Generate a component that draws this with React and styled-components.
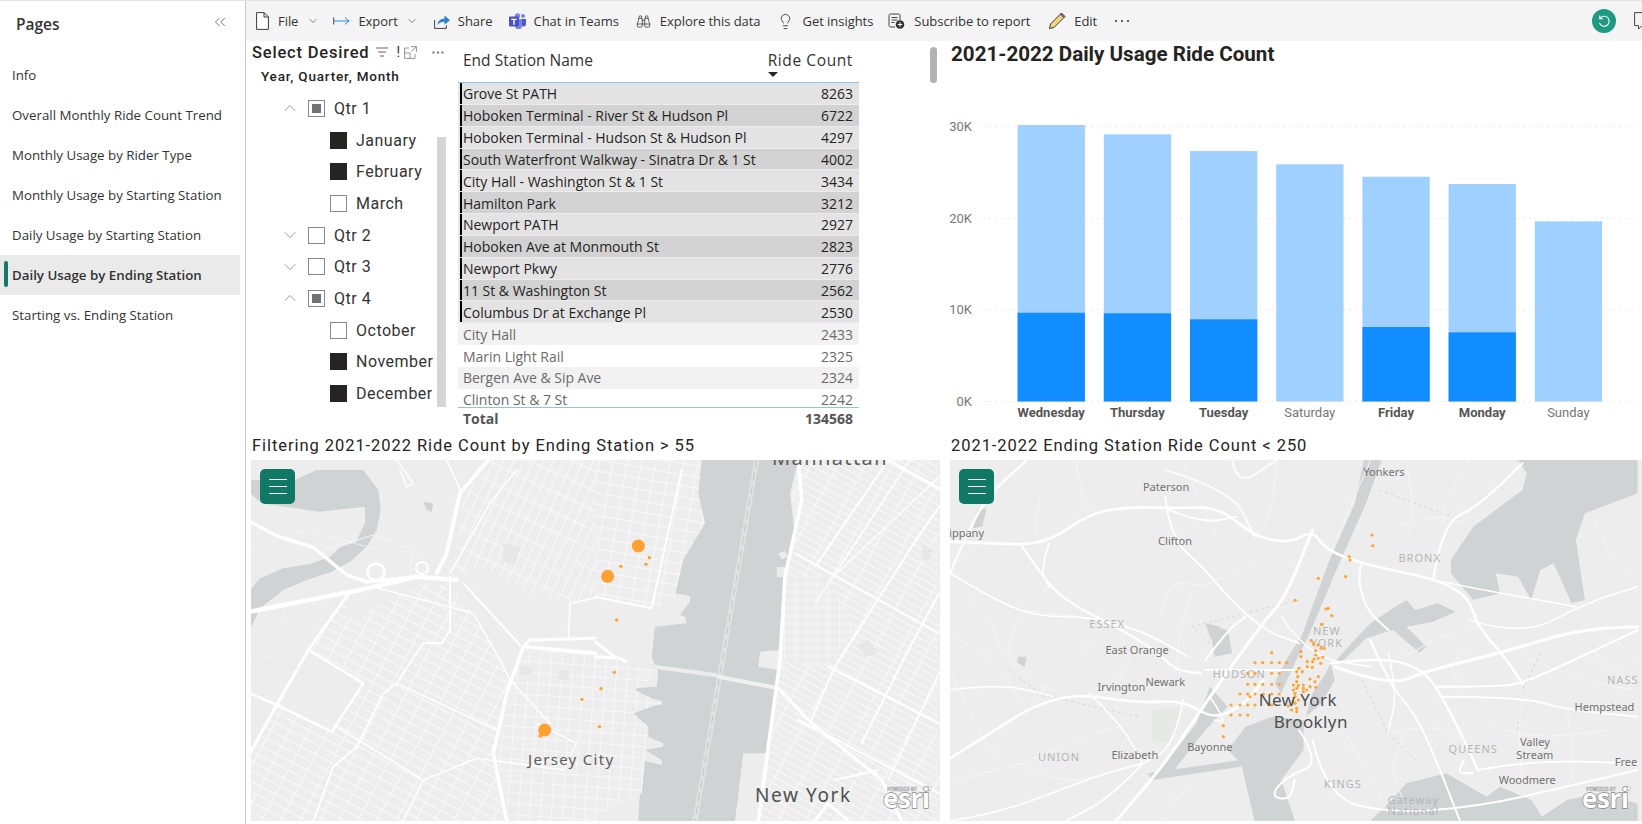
import React from 'react';
import styled, { createGlobalStyle } from 'styled-components';
import { Binoculars, ChevronDown, ChevronUp, ChevronsLeft, Lightbulb } from 'lucide-react';

const GlobalStyle = createGlobalStyle`
  html, body { margin: 0; padding: 0; background: #fff; }
  body { font-family: "Open Sans", "Noto Sans", sans-serif; color: #252423; }
`;

const din = `"Roboto", "Liberation Sans", sans-serif`;
const segoe = `"Open Sans", "Noto Sans", sans-serif`;

const Page = styled.div`
  display: flex;
  width: 1642px;
  height: 824px;
  overflow: hidden;
  border-top: 1px solid #e3e3e3;
  box-sizing: border-box;
`;

/* ---------- pages pane ---------- */
const Sidebar = styled.aside`
  width: 246px;
  flex: none;
  box-sizing: border-box;
  border-right: 1px solid #c8c6c4;
`;
const SideHead = styled.div`
  display: flex;
  align-items: center;
  justify-content: space-between;
  height: 46px;
  margin-bottom: 8px;
  padding: 0 16px 0 16px;
  font: 600 15.5px ${segoe};
  color: #333;
  svg { margin-top: -4px; color: #444; }
`;
const PageLink = styled.div`
  position: relative;
  display: flex;
  align-items: center;
  width: 240px;
  height: 40px;
  padding-left: 12px;
  box-sizing: border-box;
  font: ${p => (p.$active ? 600 : 400)} 13.3px ${segoe};
  color: #333;
  background: ${p => (p.$active ? '#eaeaea' : 'transparent')};
  ${p => p.$active && `
    &::before {
      content: '';
      position: absolute;
      left: 4px;
      top: 6px;
      width: 4px;
      height: 26px;
      border-radius: 2px;
      background: #117865;
    }
  `}
`;

/* ---------- toolbar ---------- */
const Main = styled.main`
  flex: 1;
  min-width: 0;
  display: flex;
  flex-direction: column;
`;
const Toolbar = styled.div`
  display: flex;
  align-items: center;
  flex: none;
  height: 40px;
  padding-left: 10px;
  background: #f4f4f4;
`;
const ToolItem = styled.div`
  display: flex;
  align-items: center;
  gap: ${p => p.$gap || 9}px;
  margin-right: ${p => p.$after || 16}px;
  font: 400 13px ${segoe};
  letter-spacing: -0.05px;
  color: #333;
  white-space: nowrap;
`;
const ToolRight = styled.div`
  display: flex;
  align-items: center;
  gap: 18px;
  margin-left: auto;
  margin-right: -8px;
`;
const Avatar = styled.div`
  display: flex;
  align-items: center;
  justify-content: center;
  width: 24px;
  height: 24px;
  border-radius: 50%;
  background: #1f9a82;
`;

/* ---------- report canvas ---------- */
const Canvas = styled.div`
  flex: 1;
  display: grid;
  grid-template-columns: 689px 692px;
  grid-template-rows: 395px 385px;
  column-gap: 10px;
  padding-left: 5px;
`;
const TopLeft = styled.div`
  position: relative;
  display: flex;
`;
const PageThumb = styled.div`
  position: absolute;
  right: 3px;
  top: 6px;
  width: 7px;
  height: 36px;
  border-radius: 4px;
  background: #b3b3b3;
`;
const Slicer = styled.section`
  position: relative;
  width: 207px;
  flex: none;
  overflow: hidden;
`;
const SlicerHead = styled.div`
  display: flex;
  align-items: center;
  height: 22px;
  padding-left: 1px;
  font: 500 16.5px ${din};
  letter-spacing: 0.8px;
  color: #252423;
  white-space: nowrap;
`;
const SlicerIcons = styled.div`
  display: flex;
  align-items: center;
  margin-left: 7px;
  color: #777;
`;
const TruncMark = styled.span`
  width: 3px;
  margin: 0 5px 0 8px;
  font: 400 14px ${din};
  letter-spacing: 0;
  color: #333;
`;
const SlicerSub = styled.div`
  height: 29.5px;
  padding-left: 10px;
  font: 500 13.5px/26px ${din};
  letter-spacing: 0.8px;
  color: #252423;
`;
const SlicerRow = styled.div`
  display: flex;
  align-items: center;
  height: 31.7px;
  padding-left: ${p => (p.$month ? 79 : 29)}px;
  font: 400 16px ${din};
  letter-spacing: 0.5px;
  color: #333;
  white-space: nowrap;
  svg { flex: none; margin-right: 8px; color: #666; }
`;
const Check = styled.span`
  display: flex;
  align-items: center;
  justify-content: center;
  width: 17px;
  height: 17px;
  flex: none;
  margin-right: 9px;
  box-sizing: border-box;
  border: 1px solid ${p => (p.$state === 'on' ? '#252423' : '#8a8886')};
  background: ${p => (p.$state === 'on' ? '#252423' : '#fff')};
  &::after {
    content: '';
    display: ${p => (p.$state === 'some' ? 'block' : 'none')};
    width: 9px;
    height: 9px;
    background: #737373;
  }
`;
const SlicerBar = styled.div`
  position: absolute;
  left: 186px;
  top: 96px;
  width: 9px;
  height: 270px;
  background: #d5d5d3;
`;

/* ---------- table ---------- */
const Table = styled.section`
  width: 401px;
  flex: none;
`;
const TableHead = styled.div`
  display: flex;
  justify-content: space-between;
  height: 41px;
  padding: 8px 6px 0 5px;
  box-sizing: border-box;
  font: 400 15.5px/22px ${segoe};
  color: #333;
`;
const SortCell = styled.div`
  display: flex;
  flex-direction: column;
  letter-spacing: 0.6px;
  &::after {
    content: '';
    width: 0;
    height: 0;
    margin-top: 1px;
    border-left: 5.5px solid transparent;
    border-right: 5.5px solid transparent;
    border-top: 5px solid #252423;
  }
`;
const TableBody = styled.div`
  height: 324px;
  overflow: hidden;
  box-sizing: content-box;
  border-top: 1px solid #8fc3ec;
  border-bottom: 1px solid #8fc3ec;
`;
const Row = styled.div`
  display: flex;
  justify-content: space-between;
  align-items: center;
  height: 21.85px;
  padding: 1px 6px 0 5px;
  box-sizing: border-box;
  font: 400 14px ${segoe};
  letter-spacing: -0.02px;
  color: ${p => (p.$selected ? '#252423' : '#6b6a68')};
  background: ${p => {
    if (p.$selected) return p.$odd ? '#d2d2d2' : '#e3e3e3';
    return p.$odd ? '#f2f2f2' : '#fff';
  }};
  border-bottom: 1px solid ${p => (p.$selected ? '#ececec' : 'transparent')};
  box-shadow: ${p => (p.$selected ? `inset 2px 0 0 #e9e9e9, inset 4px 0 0 #000` : 'none')};
`;
const TotalRow = styled.div`
  display: flex;
  justify-content: space-between;
  align-items: center;
  height: 20px;
  padding: 0 6px 0 5px;
  font: 700 14px ${segoe};
  color: #555;
`;

/* ---------- chart ---------- */
const ChartPanel = styled.section`
  min-width: 0;
`;
const ChartTitle = styled.h2`
  height: 26px;
  margin: 0;
  padding-left: 1px;
  font: 700 20.6px/26px ${din};
  color: #252423;
  white-space: nowrap;
`;
const ChartSvg = styled.svg`
  display: block;
  font-family: ${din};
`;
const AxisText = styled.text`
  font-size: 13px;
  fill: ${p => (p.$bold ? '#555' : '#777')};
  font-weight: ${p => (p.$bold ? 700 : 400)};
`;

/* ---------- maps ---------- */
const MapPanel = styled.section`
  min-width: 0;
`;
const MapTitle = styled.h3`
  height: 24px;
  margin: 0;
  padding-left: 1px;
  font: 400 16.5px/20px ${din};
  letter-spacing: 0.94px;
  color: #252423;
  white-space: nowrap;
`;
const MapFrame = styled.div`
  position: relative;
  height: 361px;
  overflow: hidden;
  background: #ededed;
`;
const MapSvg = styled.svg`
  display: block;
  width: 100%;
  height: 100%;
`;
const MapButton = styled.div`
  position: absolute;
  left: 9px;
  top: 9px;
  display: flex;
  flex-direction: column;
  align-items: center;
  justify-content: center;
  gap: 5.5px;
  width: 35px;
  height: 35px;
  border-radius: 5px;
  background: #117865;
`;
const MapButtonBar = styled.span`
  width: 18px;
  height: 1.6px;
  background: #fff;
`;
const MapLabel = styled.text`
  font-family: "Noto Sans", "Open Sans", sans-serif;
  font-size: ${p => p.$size || 11}px;
  letter-spacing: ${p => p.$track || 0}px;
  fill: ${p => p.$fill || '#727272'};
  text-anchor: ${p => p.$anchor || 'middle'};
`;

/* ---------- data ---------- */
const pages = ['Info', 'Overall Monthly Ride Count Trend', 'Monthly Usage by Rider Type', 'Monthly Usage by Starting Station',
  'Daily Usage by Starting Station', 'Daily Usage by Ending Station', 'Starting vs. Ending Station'];

const slicer = [
  { label: 'Qtr 1', open: true, state: 'some' },
  { label: 'January', month: true, state: 'on' },
  { label: 'February', month: true, state: 'on' },
  { label: 'March', month: true, state: 'off' },
  { label: 'Qtr 2', open: false, state: 'off' },
  { label: 'Qtr 3', open: false, state: 'off' },
  { label: 'Qtr 4', open: true, state: 'some' },
  { label: 'October', month: true, state: 'off' },
  { label: 'November', month: true, state: 'on' },
  { label: 'December', month: true, state: 'on' },
];

const rides = [
  ['Grove St PATH', 8263], ['Hoboken Terminal - River St & Hudson Pl', 6722], ['Hoboken Terminal - Hudson St & Hudson Pl', 4297],
  ['South Waterfront Walkway - Sinatra Dr & 1 St', 4002], ['City Hall - Washington St & 1 St', 3434], ['Hamilton Park', 3212],
  ['Newport PATH', 2927], ['Hoboken Ave at Monmouth St', 2823], ['Newport Pkwy', 2776], ['11 St & Washington St', 2562],
  ['Columbus Dr at Exchange Pl', 2530], ['City Hall', 2433], ['Marin Light Rail', 2325], ['Bergen Ave & Sip Ave', 2324], ['Clinton St & 7 St', 2242],
];

const days = [
  { day: 'Wednesday', total: 30190, part: 9690 }, { day: 'Thursday', total: 29170, part: 9630 },
  { day: 'Tuesday', total: 27340, part: 8970 }, { day: 'Saturday', total: 25900, part: 0 },
  { day: 'Friday', total: 24540, part: 8130 }, { day: 'Monday', total: 23740, part: 7550 },
  { day: 'Sunday', total: 19670, part: 0 },
];

/* map helpers: the numbers below were read off enlarged crops, so convert them back */
const pairs = (conv, flat) => {
  const out = [];
  for (let i = 0; i < flat.length; i += 2) out.push(conv(flat[i], flat[i + 1]));
  return out;
};
const str = pts => pts.map(p => `${p[0].toFixed(1)},${p[1].toFixed(1)}`).join(' ');
const west = (x, y) => [x / 3 - 1, y / 3];
const east = (x, y) => [344 + x / 3, y / 3];
const metro = (x, y) => [x / 2.24 - 8, y / 3 - 30];
const nyc = (x, y) => [200 + x / 3, 160 + y / 3];

// rounds a polyline off through the midpoints of its segments
const curve = pts => {
  if (pts.length < 3) return `M${pts.map(p => p.join(' ')).join('L')}`;
  let d = `M${pts[0][0]} ${pts[0][1]}`;
  for (let i = 1; i < pts.length - 1; i++) {
    const mx = (pts[i][0] + pts[i + 1][0]) / 2;
    const my = (pts[i][1] + pts[i + 1][1]) / 2;
    d += `Q${pts[i][0]} ${pts[i][1]} ${mx} ${my}`;
  }
  const last = pts[pts.length - 1];
  return `${d}L${last[0]} ${last[1]}`;
};

const WATER = '#cfd3d4';

const Road = ({ pts, w = 2, color = '#fff' }) => (
  <polyline points={str(pts)} fill="none" stroke={color} strokeWidth={w} strokeLinejoin="round" strokeLinecap="round" />
);
const CurvedRoad = ({ pts, w = 2, color = '#fff' }) => (
  <path d={curve(pts)} fill="none" stroke={color} strokeWidth={w} strokeLinecap="round" />
);

const StreetGrid = ({ id, w, h, angle, pts, base, color = '#f9f9f9' }) => (
  <g>
    <pattern id={id} width={w} height={h} patternUnits="userSpaceOnUse" patternTransform={`rotate(${angle})`}>
      <path d={`M${w / 2} 0V${h}M0 ${h / 2}H${w}`} stroke={color} strokeWidth="1" fill="none" />
    </pattern>
    {base && <polygon points={str(pts)} fill={base} />}
    <polygon points={str(pts)} fill={`url(#${id})`} />
  </g>
);

const Esri = () => (
  <g>
    <text x="636" y="331" fontFamily="Open Sans, sans-serif" fontSize="4.6" fontWeight="700" fill="#fff" stroke="#999" strokeWidth=".4">POWERED BY</text>
    <circle cx="678" cy="328.5" r="2.2" fill="#fff" stroke="#999" strokeWidth=".5" />
    <text x="632" y="348" fontFamily="Open Sans, sans-serif" fontSize="26" fontWeight="700" letterSpacing="-0.4" fill="#fff" stroke="#858585" strokeWidth="1.4" paintOrder="stroke">esri</text>
  </g>
);

/* ---------- first map ---------- */
const jerseyRoads = [
  [west, [0, 455, 330, 390, 500, 350, 620, 360], 4.5],
  [west, [0, 185, 80, 228, 190, 262, 290, 345, 350, 365, 500, 350], 3.5],
  [west, [715, 0, 630, 100, 590, 280, 560, 340], 4],
  [west, [300, 395, 175, 570, 80, 735, 0, 880], 3],
  [west, [0, 700, 80, 735, 245, 815, 340, 670, 175, 570], 2.6],
  [west, [640, 370, 810, 555], 2],
  [west, [1035, 580, 820, 560, 770, 700, 730, 880, 770, 1083], 3.6],
  [west, [820, 560, 840, 540, 1035, 535], 3],
  [west, [600, 350, 600, 510, 575, 550, 520, 550, 440, 670, 400, 700, 320, 860, 250, 920, 190, 1083], 2],
  [west, [385, 385, 670, 460, 750, 600, 780, 660, 900, 790], 1.6],
  [west, [440, 670, 740, 810], 1.6],
  [west, [260, 800, 520, 960, 680, 895, 940, 930], 1.6],
  [west, [860, 790, 980, 850, 940, 930], 1.3],
  [west, [520, 960, 460, 1083], 1.6],
  [west, [590, 0, 635, 100], 1.6],
  [west, [800, 30, 720, 130, 600, 340], 1.6],
  [west, [960, 430, 955, 540], 1.6],
  [west, [960, 430, 1035, 415], 1.6],
  [west, [0, 270, 150, 215, 240, 230, 500, 300], 0.8, '#f5f5f5'],
  [west, [100, 450, 100, 480, 290, 590], 0.8, '#f5f5f5'],
  [west, [220, 270, 370, 225, 490, 270, 480, 345], 0.9, '#f6f6f6'],
  [west, [0, 590, 240, 650, 450, 720], 0.7, '#e6e6e6'],
  [west, [440, 0, 490, 70, 470, 80, 450, 30], 1.4],
  [east, [0, 410, 170, 445, 260, 30], 2],
  [east, [0, 545, 60, 590], 3],
  [east, [0, 590, 75, 595, 100, 610], 3],
  [east, [100, 610, 360, 645], 4, '#ebecec'],
  [east, [370, 650, 550, 685], 4, '#eff0f0'],
  [east, [610, 0, 620, 120, 570, 350, 555, 600, 490, 1083], 3.6],
  [east, [550, 685, 650, 790, 860, 960, 920, 1083], 3],
  [east, [660, 320, 880, 0], 2],
  [east, [715, 350, 945, 0], 1.6],
  [east, [660, 430, 715, 350, 1032, 50], 1.2],
  [east, [640, 800, 720, 620, 950, 260, 1032, 140], 2],
  [east, [800, 850, 945, 560, 1032, 400], 2],
  [east, [880, 960, 1032, 640], 1.6],
  [east, [600, 280, 1032, 520], 2],
  [east, [700, 620, 1032, 790], 2.6],
  [east, [880, 0, 1032, 85], 2.6],
  [east, [610, 780, 1032, 1000], 2],
  [east, [720, 960, 850, 930], 2],
  [east, [660, 1083, 700, 1030, 760, 1083], 3],
];

const jerseyDots = [
  [...east(130, 258), 6.5], [...east(38, 349), 6.5], [...east(163, 293), 1.7], [...east(153, 313), 1.7], [...east(78, 319), 1.7],
  [...east(65, 480), 1.7], [...east(58, 637), 1.7], [...east(18, 686), 1.7], [...east(13, 800), 1.7],
  [...west(884, 810), 6.5], [...west(871, 827), 2], [...west(996, 718), 1.7],
];

const JerseyMap = () => (
  <MapSvg viewBox="0 0 689 361">
    <defs>
      <filter id="soft-a"><feGaussianBlur stdDeviation="0.3" /></filter>
    </defs>
    <g filter="url(#soft-a)">
      <polygon fill={WATER} points={str(pairs(west, [135, 60, 200, 30, 340, 30, 385, 90, 392, 150, 380, 210, 350, 260, 300, 305, 245, 335, 170, 360, 100, 390, 30, 445, 0, 510, 0, 390, 30, 355, 100, 325, 180, 312, 240, 290, 270, 262, 318, 245, 345, 190, 345, 140, 210, 155, 35, 130, 0, 100, 0, 60]))} />
      <polygon fill={WATER} points={str(pairs(west, [520, 125, 550, 130, 545, 155, 530, 150]))} />
      <polygon fill={WATER} points={str(pairs(east, [320, 0, 610, 0, 585, 100, 600, 230, 570, 350, 555, 570, 495, 575, 490, 620, 550, 630, 550, 680, 515, 880, 445, 880, 420, 1083, 130, 1083, 140, 900, 200, 915, 200, 900, 150, 870, 205, 860, 205, 850, 160, 830, 160, 800, 115, 785, 115, 720, 200, 735, 200, 722, 110, 705, 110, 685, 185, 680, 190, 640, 170, 590, 180, 500, 275, 490, 270, 470, 255, 465, 285, 425, 285, 408, 240, 400, 265, 300, 300, 240, 330, 190, 310, 100]))} />
      <polygon fill="#eaebeb" points={str(pairs(east, [550, 280, 570, 272, 578, 290, 560, 298]))} />
      <polygon fill="#eaebeb" points={str(pairs(east, [545, 322, 580, 320, 572, 352, 545, 352]))} />
      <polyline points={str(pairs(east, [485, 0, 300, 1083]))} stroke="#e0e1e1" strokeWidth="5" fill="none" />
      <polyline points={str(pairs(east, [485, 0, 300, 1083]))} stroke="#c3c5c5" strokeWidth="1" strokeDasharray="8 5" fill="none" />

      <StreetGrid id="ga" w={9} h={18} angle={25} pts={pairs(west, [640, 110, 720, 0, 1035, 0, 1035, 430, 960, 430, 850, 400, 700, 320, 640, 340, 610, 330])} />
      <StreetGrid id="gb" w={14} h={11} angle={10} pts={pairs(east, [0, 0, 320, 0, 310, 100, 330, 190, 265, 300, 240, 410, 170, 450, 0, 415])} />
      <StreetGrid id="gc" w={17} h={9} angle={28} pts={pairs(west, [290, 480, 520, 370, 600, 380, 670, 460, 750, 610, 780, 660, 740, 800, 730, 900, 760, 1083, 0, 1083, 0, 900, 80, 740, 180, 570, 300, 400])} />
      <polygon fill="#ededed" points={str(pairs(west, [178, 577, 335, 672, 245, 815, 92, 735]))} />
      <StreetGrid id="gd" w={11} h={11} angle={4} base="#ededed" color="#f7f7f7" pts={[...pairs(west, [820, 570, 1035, 585]), ...pairs(east, [100, 600, 170, 600, 190, 640, 120, 690, 200, 730, 115, 760, 160, 800, 140, 1000, 60, 1040, 0, 1083]), ...pairs(west, [780, 1083, 745, 900, 770, 700])]} />
      <StreetGrid id="ge" w={24} h={6.6} angle={29} pts={pairs(east, [610, 0, 1032, 0, 1032, 1083, 490, 1083, 555, 600, 570, 350, 600, 230, 590, 100])} />
      <StreetGrid id="gf" w={11} h={8} angle={0} base="#ededed" color="#f6f6f6" pts={pairs(east, [570, 350, 700, 350, 780, 500, 700, 620, 555, 600])} />

      <polygon fill="#e5e8e5" points={str(pairs(west, [760, 250, 810, 265, 795, 315, 760, 305]))} />
      <polygon fill="#e5e8e5" points={str(pairs(west, [810, 615, 845, 618, 845, 645, 808, 645]))} />
      <polygon fill="#e5e8e5" points={str(pairs(west, [925, 630, 955, 632, 955, 660, 925, 658]))} />
      <polygon fill="#e5e8e5" points={str(pairs(east, [985, 255, 1015, 270, 1000, 305, 980, 295]))} />
      <polygon fill="#e5e8e5" points={str(pairs(east, [785, 555, 820, 540, 850, 575, 815, 590]))} />

      {jerseyRoads.map(([conv, flat, w, color], i) => <Road key={i} pts={pairs(conv, flat)} w={w} color={color} />)}
      <circle cx="125" cy="112" r="8.5" fill="none" stroke="#fff" strokeWidth="2.6" />
      <circle cx="171" cy="108" r="6" fill="none" stroke="#fff" strokeWidth="2.2" />
    </g>
    {jerseyDots.map(([cx, cy, r], i) => <circle key={i} cx={cx} cy={cy} r={r} fill="#ffa033" />)}
    <MapLabel x="277" y="305" $anchor="start" $size={15} $track={1.3} $fill="#5c5c5c">Jersey City</MapLabel>
    <MapLabel x="521" y="5" $anchor="start" $size={20} $track={1.4} $fill="#5c5c5c">Manhattan</MapLabel>
    <MapLabel x="504" y="342" $anchor="start" $size={19} $track={1.6} $fill="#505050">New York</MapLabel>
    <Esri />
  </MapSvg>
);

/* ---------- second map ---------- */
const metroWater = [
  [945, 90, 985, 90, 950, 220, 890, 400, 820, 620, 790, 700, 760, 790, 745, 760, 775, 680, 805, 620, 865, 400, 925, 220],
  [740, 860, 810, 870, 810, 960, 760, 1050, 790, 1172, 700, 1172, 670, 1000, 640, 960, 680, 890],
  [600, 770, 640, 830, 590, 900, 520, 1020, 470, 1050, 500, 1000, 570, 880],
  [460, 1030, 670, 990, 670, 1010, 470, 1050],
  [600, 590, 640, 600, 650, 670, 610, 680],
  [1290, 90, 1558, 90, 1558, 190, 1440, 250, 1420, 330, 1440, 510, 1410, 520, 1370, 400, 1340, 420, 1320, 510, 1290, 440, 1240, 430, 1250, 490, 1190, 510, 1140, 430, 1140, 390, 1190, 290, 1300, 180, 1310, 130],
  [960, 580, 1010, 535, 1040, 510, 1060, 540, 1110, 520, 1150, 545, 1100, 575, 1040, 590, 1085, 650, 1070, 668, 1010, 600, 950, 625, 900, 690, 880, 695, 920, 635],
  [870, 700, 880, 750, 850, 820, 815, 860, 830, 790, 860, 730],
  [960, 1172, 1000, 1120, 1040, 1060, 1130, 1030, 1220, 1100, 1250, 1070, 1320, 1110, 1350, 1172],
  [1330, 1172, 1400, 1110, 1470, 1090, 1558, 1120, 1558, 1172],
  [80, 240, 100, 235, 90, 290, 70, 295],
  [170, 680, 190, 680, 185, 710, 170, 700],
  [590, 580, 625, 590, 610, 640, 600, 620],
];

const metroRoads = [
  [[18, 335, 100, 340, 230, 345, 330, 250, 420, 230, 520, 235, 620, 230, 700, 320, 780, 340, 830, 300, 860, 360, 940, 400, 1040, 430, 1110, 450, 1180, 500, 1200, 590, 1260, 680, 1300, 760], 2.6],
  [[18, 430, 50, 330, 100, 200, 190, 90], 2.2],
  [[180, 350, 240, 470, 300, 530, 360, 570, 480, 660, 520, 720, 580, 730], 2.2],
  [[500, 200, 510, 320, 590, 420, 640, 500, 720, 600, 800, 640], 2],
  [[18, 985, 120, 900, 200, 830, 300, 790, 440, 820, 540, 810, 610, 870, 680, 820, 720, 750], 2.6],
  [[390, 1172, 470, 1050, 530, 940, 600, 800, 680, 650, 730, 560, 770, 500, 830, 300], 3],
  [[590, 720, 680, 720, 800, 720], 2],
  [[880, 710, 1000, 770, 1090, 720, 1250, 670, 1420, 600, 1558, 590], 3],
  [[870, 700, 990, 680, 1080, 720, 1120, 800, 1170, 930, 1200, 1020], 2.4],
  [[960, 630, 1000, 760, 1060, 850, 1110, 1000, 1160, 1172], 2],
  [[1120, 800, 1300, 800, 1400, 840, 1558, 860], 2],
  [[800, 900, 850, 1000, 770, 1040, 735, 1100, 780, 1110, 790, 1050], 2],
  [[830, 930, 860, 1100, 1000, 1150, 1200, 1130, 1400, 1070, 1558, 1020], 2],
  [[1170, 990, 1150, 1030, 1190, 1030], 2],
  [[1100, 450, 1120, 280, 1200, 230, 1300, 100], 2.4],
  [[940, 400, 930, 440, 950, 540, 1000, 600], 2],
  [[650, 90, 660, 170, 750, 90], 1.8],
  [[500, 120, 650, 180, 700, 320], 1.6],
  [[1180, 570, 1300, 620, 1440, 520, 1558, 470], 1.6],
  [[450, 1000, 380, 1100, 280, 1172], 2],
  [[240, 340, 220, 420, 240, 470], 1.8],
  [[18, 430, 130, 520, 220, 560, 330, 560, 440, 600, 500, 640, 550, 680], 1.8],
  [[590, 690, 640, 600, 680, 560], 2],
  [[500, 235, 580, 280, 660, 260], 1.8],
  [[1100, 450, 1210, 480, 1420, 530], 1.6],
  [[1000, 670, 1020, 790, 1000, 900], 1.6],
  [[1110, 770, 1240, 770, 1300, 760, 1400, 700, 1558, 600], 2.2],
  [[18, 780, 130, 760, 250, 800], 1.6],
  [[330, 790, 400, 880, 450, 1000], 1.6],
  [[18, 1172, 130, 1150, 340, 1040, 450, 1000], 1.6],
  [[1200, 1020, 1320, 990, 1558, 1000], 2],
  [[760, 560, 820, 680, 960, 710], 1.6],
  [[540, 810, 520, 950, 450, 1000], 1.6],
  [[600, 800, 640, 880, 610, 870], 1.6],
];

const metroThin = [
  [240, 470, 180, 540, 140, 660, 180, 730, 260, 790], [490, 560, 500, 450, 590, 470], [560, 480, 520, 640, 540, 780],
  [960, 90, 870, 370], [1000, 300, 1100, 250, 1180, 280], [1300, 760, 1290, 900, 1300, 1060], [1410, 600, 1500, 720, 1558, 760],
  [420, 230, 340, 130, 300, 90], [18, 720, 80, 900, 130, 1000], [18, 610, 120, 690, 170, 800], [300, 90, 310, 200, 350, 260],
  [220, 200, 200, 300, 230, 340], [540, 100, 600, 280, 620, 330], [750, 100, 740, 250, 700, 320], [180, 540, 280, 555, 360, 570],
  [50, 500, 110, 560, 130, 660], [340, 640, 280, 700, 220, 790], [420, 680, 400, 770, 340, 800], [700, 400, 650, 440, 560, 470],
  [1220, 880, 1300, 930, 1500, 900], [1400, 840, 1420, 1000, 1400, 1070], [1050, 880, 1000, 1000, 1030, 1100], [900, 900, 960, 1040, 1000, 1150],
  [1450, 600, 1530, 640, 1558, 700], [1180, 640, 1120, 720, 1200, 800], [600, 1030, 520, 1100, 500, 1172], [180, 1000, 260, 1060, 340, 1040],
  [1460, 260, 1500, 400, 1558, 440], [1040, 90, 1060, 240, 1040, 330], [1180, 90, 1130, 200, 1120, 280], [20, 1060, 90, 1030, 180, 1000],
  [1000, 910, 1090, 880, 1170, 930], [1300, 680, 1450, 760, 1558, 780], [1200, 590, 1110, 620, 1040, 680], [420, 880, 300, 930, 180, 1000],
];

const metroBorders = [
  [980, 180, 1160, 270],
  [800, 510, 560, 590, 600, 640],
  [1340, 670, 1300, 780, 1290, 900],
  [210, 790, 440, 860],
  [940, 750, 1000, 910, 1060, 990],
  [150, 720, 230, 800],
];

const metroLabels = [
  ['Yonkers', 990, 127], ['Paterson', 502, 172], ['ippany', 55, 310], ['Clifton', 522, 334], ['East Orange', 437, 660], ['Newark', 500, 755],
  ['Irvington', 402, 771], ['Hempstead', 1484, 832], ['Bayonne', 600, 952], ['Valley', 1328, 936], ['Stream', 1328, 975], ['Elizabeth', 432, 974],
  ['Free', 1532, 997], ['Woodmere', 1311, 1050],
];
const metroRegions = [
  ['BRONX', 1070, 384], ['ESSEX', 370, 581], ['NEW', 862, 604], ['YORK', 862, 638], ['HUDSON', 666, 733], ['NASS', 1525, 750],
  ['UNION', 262, 980], ['QUEENS', 1190, 956], ['KINGS', 898, 1061], ['Gateway', 1056, 1110], ['National', 1056, 1144],
];

const nycDots = pairs(nyc, [
  515, 13, 483, 62, 490, 72, 503, 75, 513, 85, 523, 85, 497, 92, 453, 95, 453, 110, 497, 105, 518, 112, 492, 117, 505, 115, 472, 125, 488, 125, 512, 130,
  472, 140, 487, 142, 447, 145, 457, 155, 440, 155, 365, 98, 315, 128, 338, 128, 365, 128, 388, 128, 410, 128, 315, 160, 293, 160, 365, 160, 388, 160,
  293, 193, 315, 193, 338, 193, 365, 193, 388, 193, 270, 222, 293, 222, 300, 230, 315, 222, 340, 222, 365, 222, 388, 222, 243, 255, 270, 255, 293, 255,
  315, 255, 365, 255, 243, 285, 270, 285, 293, 285, 220, 317, 220, 350, 443, 170, 505, 170, 480, 177, 495, 185, 440, 185, 430, 195, 445, 197, 460, 195,
  480, 200, 497, 202, 440, 205, 430, 210, 460, 205, 470, 210, 460, 215, 435, 220, 415, 258, 435, 230, 425, 270, 440, 265, 445, 240, 435, 250, 440, 275, 430, 245,
]).concat(pairs(metro, [963, 315, 965, 347, 912, 380, 914, 390, 904, 440, 843, 445, 791, 511, 860, 537, 865, 535, 873, 557, 851, 583]));

const MetroMap = () => (
  <MapSvg viewBox="0 0 692 361">
    <defs>
      <filter id="soft-b"><feGaussianBlur stdDeviation="0.4" /></filter>
    </defs>
    <g filter="url(#soft-b)">
      <polygon fill="#e6e9e6" points={str(pairs(metro, [470, 840, 540, 830, 510, 940, 470, 930]))} />
      {metroWater.map((flat, i) => <polygon key={i} fill={WATER} points={str(pairs(metro, flat))} />)}
      {metroBorders.map((flat, i) => <polyline key={i} points={str(pairs(metro, flat))} fill="none" stroke="#cfcfcf" strokeWidth=".8" strokeDasharray="3 3" />)}
      {metroThin.map((flat, i) => <CurvedRoad key={i} pts={pairs(metro, flat)} w={1} color="#f5f5f5" />)}
      {metroRoads.map(([flat, w], i) => <CurvedRoad key={i} pts={pairs(metro, flat)} w={w} />)}
    </g>
    {metroRegions.map(([t, x, y]) => {
      const [mx, my] = metro(x, y);
      return <MapLabel key={t} x={mx} y={my + 4} $size={11} $track={1} $fill="#b5b5b5">{t}</MapLabel>;
    })}
    {nycDots.map(([cx, cy], i) => <circle key={i} cx={cx} cy={cy} r="1.6" fill="#ffa533" />)}
    {metroLabels.map(([t, x, y]) => {
      const [mx, my] = metro(x, y);
      return <MapLabel key={t} x={mx} y={my + 4}>{t}</MapLabel>;
    })}
    <MapLabel x={metro(797, 0)[0]} y="246" $size={17} $track={0.4} $fill="#4f4f4f">New York</MapLabel>
    <MapLabel x={metro(826, 0)[0]} y="268" $size={17} $track={0.4} $fill="#4f4f4f">Brooklyn</MapLabel>
    <Esri />
  </MapSvg>
);

/* ---------- toolbar icons ---------- */
const FileIcon = () => (
  <svg width="13" height="18" viewBox="0 0 13 18"><path d="M.6.6h7.6l4.2 4.2v12.6H.6zM8 .6v4.4h4.4" fill="#fff" stroke="#3a3a3a" /></svg>
);
const ExportIcon = () => (
  <svg width="17" height="10" viewBox="0 0 17 10"><path d="M.7 1.5v7" stroke="#444" /><path d="M1 5h15M12 1.5L16 5l-4 3.5" stroke="#2b88d8" fill="none" /></svg>
);
const ShareIcon = () => (
  <svg width="16" height="15" viewBox="0 0 16 15">
    <path d="M.6 6v8.400h11.800v-3" fill="none" stroke="#444" />
    <path d="M3.500 11c.3-4.500 3.500-6.300 7-6.300V1.500L16 6.200l-5.500 4.600v-3c-3 0-5.500.8-7 3.200z" fill="#2f7fd0" />
  </svg>
);
const TeamsIcon = () => (
  <svg width="17" height="16" viewBox="0 0 17 16">
    <circle cx="14" cy="3" r="2" fill="#7b83eb" />
    <path d="M11 6h6v5a2.500 2.500 0 0 1-5 0z" fill="#5059c9" />
    <circle cx="8.500" cy="2.800" r="2.600" fill="#7b83eb" />
    <path d="M5 6h8v6.500a3.500 3.500 0 0 1-7 .5z" fill="#7b83eb" />
    <rect y="3.500" width="10" height="10" rx="1" fill="#4b53bc" />
    <path d="M2.300 5.800h5.400v1.300H5.700v4.600H4.300V7.100H2.300z" fill="#fff" />
  </svg>
);
const SubscribeIcon = () => (
  <svg width="17" height="16" viewBox="0 0 17 16">
    <path d="M7 14H2.500A1.500 1.500 0 0 1 1 12.500v-10A1.500 1.500 0 0 1 2.500 1h8A1.500 1.500 0 0 1 12 2.500V7" fill="none" stroke="#444" />
    <path d="M3.500 4.500h6M3.500 7h6M3.500 9.500h3" stroke="#444" />
    <circle cx="12" cy="11.500" r="4.300" fill="#333" />
    <path d="M12 9.300v4.400M9.800 11.500h4.400" stroke="#fff" />
  </svg>
);
const PencilIcon = () => (
  <svg width="18" height="18" viewBox="0 0 18 18">
    <path d="M1.500 16.500l1-4.500L12.500 2l3.500 3.500L6 15.500z" fill="#f4d27e" stroke="#3c3c3c" strokeLinejoin="round" />
    <path d="M12.500 2l1-1 3.500 3.500-1 1z" fill="#c57cb8" stroke="#3c3c3c" strokeLinejoin="round" />
  </svg>
);
const DotsIcon = () => (
  <svg width="16" height="4" viewBox="0 0 16 4"><circle cx="2" cy="2" r="1" fill="#333" /><circle cx="8" cy="2" r="1" fill="#333" /><circle cx="14" cy="2" r="1" fill="#333" /></svg>
);
const ResetIcon = () => (
  <svg width="14" height="14" viewBox="0 0 14 14"><path d="M3 4.500A5 5 0 1 1 2.500 9M2.800 1.500v3.200H6" fill="none" stroke="#fff" strokeWidth="1.100" /></svg>
);
const CommentIcon = () => (
  <svg width="16" height="18" viewBox="0 0 16 18"><path d="M.6.600h14.800v13H8l-3.500 3.500v-3.500H.6z" fill="none" stroke="#444" /></svg>
);
const FilterIcon = () => (
  <svg width="12" height="10" viewBox="0 0 12 10"><path d="M0 1h12M2 5h8M4 9h4" stroke="#666" /></svg>
);
const FocusIcon = () => (
  <svg width="13" height="13" viewBox="0 0 13 13"><path d="M7 .6h5.400V6M12.400.6L7.500 5.500M5 2H.6v10.400H11V8M.6 7H6v5.400" fill="none" stroke="#8a8886" strokeWidth=".9" /></svg>
);
const SlicerDots = styled.svg`
  margin-left: 15px;
`;
const SmallDots = () => (
  <SlicerDots width="12" height="3" viewBox="0 0 12 3"><circle cx="1.500" cy="1.500" r="1.200" fill="#888" /><circle cx="6" cy="1.500" r="1.200" fill="#888" /><circle cx="10.500" cy="1.500" r="1.200" fill="#888" /></SlicerDots>
);

const Chart = () => {
  const base = 334.5;
  const scale = 91.6 / 10000;
  return (
    <ChartSvg width="692" height="369" viewBox="0 0 692 369">
      {days.map((d, i) => {
        const x = 67.6 + i * 86.2;
        return (
          <g key={d.day}>
            <rect x={x} y={base - d.total * scale} width="67.3" height={d.total * scale} fill="#a0d0ff" />
            {d.part > 0 && <rect x={x} y={base - d.part * scale} width="67.3" height={d.part * scale} fill="#118dff" />}
            <AxisText x={x + 33.6} y="349.5" textAnchor="middle" $bold={d.part > 0}>{d.day}</AxisText>
          </g>
        );
      })}
      {[0, 10000, 20000, 30000].map(v => {
        const y = base - v * scale;
        return (
          <g key={v}>
            <line x1="33.6" x2="684" y1={y} y2={y} stroke="#bdbdbd" strokeOpacity=".7" strokeDasharray="1 5" />
            <AxisText x="22" y={y + 4.5} textAnchor="end">{v / 1000}K</AxisText>
          </g>
        );
      })}
    </ChartSvg>
  );
};

const App = () => (
  <>
    <GlobalStyle />
    <Page>
      <Sidebar>
        <SideHead>Pages <ChevronsLeft size={18} strokeWidth={1} /></SideHead>
        {pages.map(p => <PageLink key={p} $active={p === 'Daily Usage by Ending Station'}>{p}</PageLink>)}
      </Sidebar>
      <Main>
        <Toolbar>
          <ToolItem $after={14}><FileIcon />File<ChevronDown size={12} strokeWidth={1.2} /></ToolItem>
          <ToolItem $gap={8}><ExportIcon />Export<ChevronDown size={12} strokeWidth={1.2} /></ToolItem>
          <ToolItem $gap={8}><ShareIcon />Share</ToolItem>
          <ToolItem $gap={8} $after={17}><TeamsIcon />Chat in Teams</ToolItem>
          <ToolItem><Binoculars size={15} strokeWidth={1.2} />Explore this data</ToolItem>
          <ToolItem $after={15}><Lightbulb size={17} strokeWidth={1.2} />Get insights</ToolItem>
          <ToolItem $after={18}><SubscribeIcon />Subscribe to report</ToolItem>
          <ToolItem $gap={8} $after={17}><PencilIcon />Edit</ToolItem>
          <ToolItem><DotsIcon /></ToolItem>
          <ToolRight>
            <Avatar><ResetIcon /></Avatar>
            <CommentIcon />
          </ToolRight>
        </Toolbar>
        <Canvas>
          <TopLeft>
            <Slicer>
              <SlicerHead>
                Select Desired
                <SlicerIcons><FilterIcon /><TruncMark>!</TruncMark><FocusIcon /><SmallDots /></SlicerIcons>
              </SlicerHead>
              <SlicerSub>Year, Quarter, Month</SlicerSub>
              {slicer.map(s => (
                <SlicerRow key={s.label} $month={s.month}>
                  {!s.month && (s.open ? <ChevronUp size={20} strokeWidth={0.8} /> : <ChevronDown size={20} strokeWidth={0.8} />)}
                  <Check $state={s.state} />
                  {s.label}
                </SlicerRow>
              ))}
              <SlicerBar />
            </Slicer>
            <Table>
              <TableHead>
                <div>End Station Name</div>
                <SortCell>Ride Count</SortCell>
              </TableHead>
              <TableBody>
                {rides.map(([name, count], i) => (
                  <Row key={name} $selected={i < 11} $odd={i % 2 === 1}>
                    <span>{name}</span>
                    <span>{count}</span>
                  </Row>
                ))}
              </TableBody>
              <TotalRow><span>Total</span><span>134568</span></TotalRow>
            </Table>
            <PageThumb />
          </TopLeft>
          <ChartPanel>
            <ChartTitle>2021-2022 Daily Usage Ride Count</ChartTitle>
            <Chart />
          </ChartPanel>
          <MapPanel>
            <MapTitle>Filtering 2021-2022 Ride Count by Ending Station &gt; 55</MapTitle>
            <MapFrame>
              <JerseyMap />
              <MapButton><MapButtonBar /><MapButtonBar /><MapButtonBar /></MapButton>
            </MapFrame>
          </MapPanel>
          <MapPanel>
            <MapTitle>2021-2022 Ending Station Ride Count &lt; 250</MapTitle>
            <MapFrame>
              <MetroMap />
              <MapButton><MapButtonBar /><MapButtonBar /><MapButtonBar /></MapButton>
            </MapFrame>
          </MapPanel>
        </Canvas>
      </Main>
    </Page>
  </>
);

export default App;
